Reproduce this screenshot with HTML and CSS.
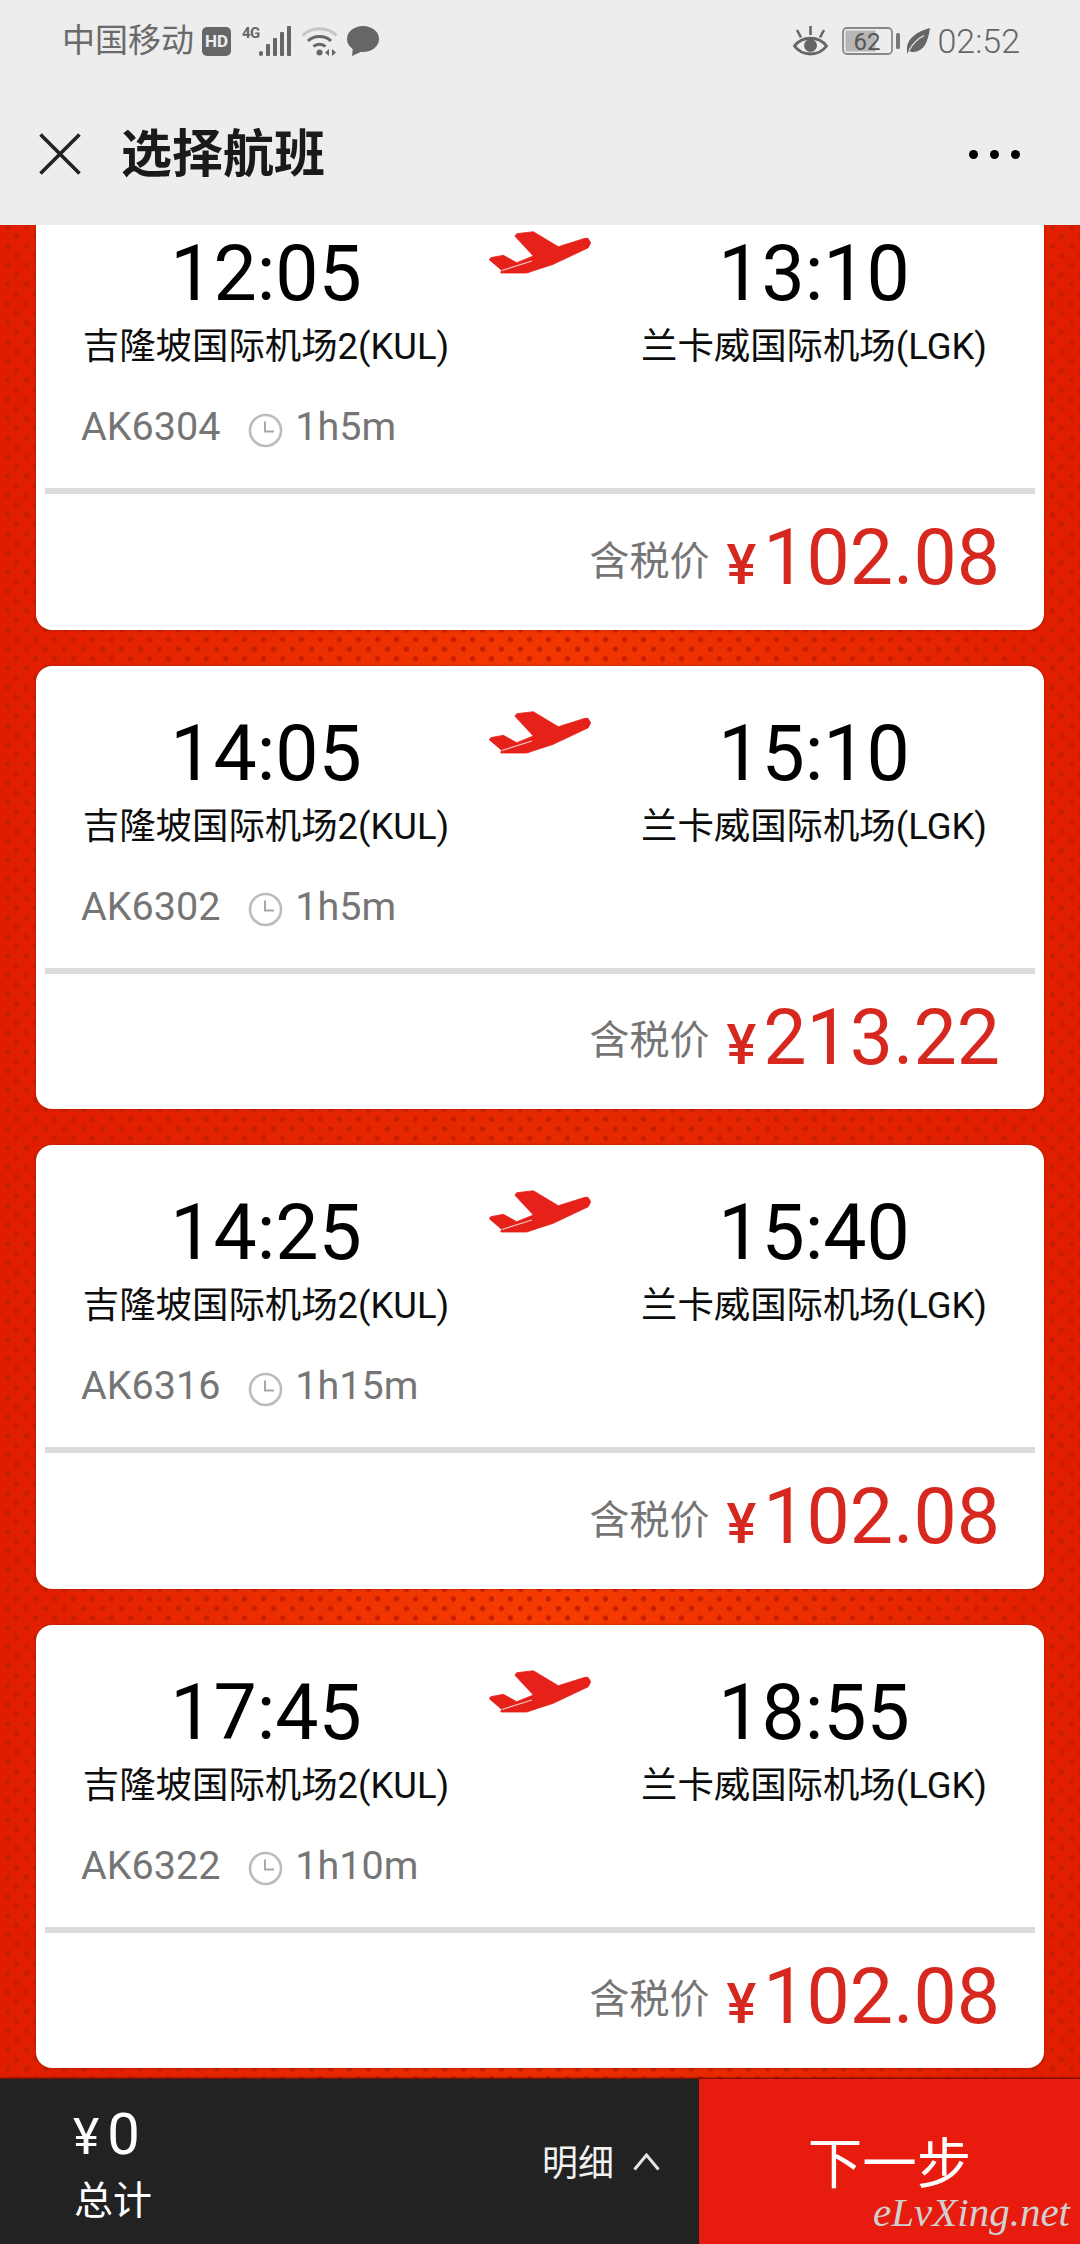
FILE: index.html
```html
<!DOCTYPE html>
<html lang="zh-CN">
<head>
<meta charset="utf-8">
<title>选择航班</title>
<link rel="stylesheet" href="styles.css">
</head>
<body>
<svg class="defs" width="0" height="0" aria-hidden="true">
  <symbol id="plane" viewBox="19 19 102 44">
    <path d="M120.7 31.7 118 27.3 115 27.3 88.3 35.7 63.3 20.7 46.7 22.7 45 25.3 63.3 45 46.7 51.7 33.3 44.3 20.7 46.7 19.3 48.7 31.7 59.3 30.7 62 56.7 62 83.3 53.3 118.3 36.7Z" fill="#e5211a" stroke="#e5211a" stroke-width=".8"/>
    <path d="M32 59.5 62 50" stroke="#fff" stroke-width="1.2" opacity=".75" fill="none"/>
  </symbol>
  <symbol id="clock" viewBox="0 0 35 35">
    <circle cx="17.5" cy="17.5" r="15.5" fill="none" stroke="#bcbcbc" stroke-width="2.6"/>
    <path d="M17 8.5V18.5H26" fill="none" stroke="#a8a8a8" stroke-width="2"/>
  </symbol>
</svg>
<div class="app">
  <header class="head">
    <div class="status">
      <div class="status-side">
        <span class="carrier">中国移动</span>
        <svg class="ic-hd" width="29" height="29" viewBox="0 0 29 29"><rect width="29" height="29" rx="5" fill="#666"/><text x="14.5" y="20" text-anchor="middle" class="hd-text">HD</text></svg>
        <svg class="ic-sig" width="49" height="30" viewBox="0 0 49 30"><text x="0" y="12" class="sig-text">4G</text><rect x="17" y="25" width="4" height="5" rx="2" fill="#666"/><rect x="24" y="18" width="4" height="12" rx="1" fill="#666"/><rect x="31" y="12" width="4" height="18" rx="1" fill="#666"/><rect x="38" y="6" width="4" height="24" rx="1" fill="#666"/><rect x="45" y="0" width="4" height="30" rx="1" fill="#666"/></svg>
        <svg class="ic-wifi" width="37" height="30" viewBox="0 0 37 30"><path d="M1.500 9.500C10.500 .5 26.500 .5 35.500 9.500" fill="none" stroke="#c6c6c6" stroke-width="3"/><path d="M7 15C13 9 24 9 30 15" fill="none" stroke="#666" stroke-width="3"/><path d="M12.500 20.500C15.500 17.500 21.500 17.500 24.500 20.500" fill="none" stroke="#666" stroke-width="3"/><circle cx="18.500" cy="26.500" r="3" fill="#666"/><path d="M28 23v7l-4-3.500zM31 23v7l4-3.500z" fill="#666"/></svg>
        <svg class="ic-bubble" width="32" height="30" viewBox="0 0 32 30"><ellipse cx="16" cy="13" rx="16" ry="13" fill="#666"/><path d="M6 21 5 30 16 25z" fill="#666"/></svg>
      </div>
      <div class="status-side">
        <svg class="ic-eye" width="35" height="30" viewBox="0 0 35 30"><path d="M1.500 20C9 9.500 26 9.500 33.500 20 26 30.500 9 30.500 1.500 20Z" fill="none" stroke="#666" stroke-width="3"/><circle cx="17.500" cy="19.500" r="6.500" fill="#666"/><path d="M17.500 0v9M4 4l4 7.500M31 4l-4 7.500" stroke="#666" stroke-width="2.600"/></svg>
        <svg class="ic-batt" width="58" height="28" viewBox="0 0 58 28"><rect x="1" y="1" width="49" height="26" rx="4" fill="none" stroke="#888" stroke-width="1.800"/><rect x="3.500" y="3.500" width="30" height="21" fill="#b6b6b6"/><rect x="54" y="6" width="4" height="16" rx="1.500" fill="#777"/><text x="25" y="23" text-anchor="middle" class="batt-text">62</text></svg>
        <svg class="ic-leaf" width="23" height="26" viewBox="0 0 23 26"><path d="M23 0C21 14 17 23 7 24 4.500 24.300 3 23.500 2 22.500L0 26 0 22C-1 12 8 4 23 0Z" fill="#666"/><path d="M2 22.500C6 15 11 10.500 17 7.500" stroke="#eee" stroke-width="1.200" fill="none"/></svg>
        <span class="clock-time">02:52</span>
      </div>
    </div>
    <div class="toolbar">
      <svg class="ic-close" width="42" height="42" viewBox="0 0 42 42"><path d="M1.500 1.500 40.500 40.500M40.500 1.500 1.500 40.500" stroke="#222" stroke-width="3.600" fill="none"/></svg>
      <h1 class="title">选择航班</h1>
      <div class="dots"><i></i><i></i><i></i></div>
    </div>
  </header>

  <main class="list">
    <article class="card">
      <div class="route">
        <div class="point"><div class="time">12:05</div><div class="airport">吉隆坡国际机场2(KUL)</div></div>
        <svg class="plane"><use href="#plane"/></svg>
        <div class="point"><div class="time">13:10</div><div class="airport">兰卡威国际机场(LGK)</div></div>
      </div>
      <div class="meta"><span>AK6304</span><svg class="clock"><use href="#clock"/></svg><span>1h5m</span></div>
      <div class="rule"></div>
      <div class="fare"><span class="fare-label">含税价</span><span class="price"><span class="yen">¥</span>102.08</span></div>
    </article>
    <article class="card">
      <div class="route">
        <div class="point"><div class="time">14:05</div><div class="airport">吉隆坡国际机场2(KUL)</div></div>
        <svg class="plane"><use href="#plane"/></svg>
        <div class="point"><div class="time">15:10</div><div class="airport">兰卡威国际机场(LGK)</div></div>
      </div>
      <div class="meta"><span>AK6302</span><svg class="clock"><use href="#clock"/></svg><span>1h5m</span></div>
      <div class="rule"></div>
      <div class="fare"><span class="fare-label">含税价</span><span class="price"><span class="yen">¥</span>213.22</span></div>
    </article>
    <article class="card">
      <div class="route">
        <div class="point"><div class="time">14:25</div><div class="airport">吉隆坡国际机场2(KUL)</div></div>
        <svg class="plane"><use href="#plane"/></svg>
        <div class="point"><div class="time">15:40</div><div class="airport">兰卡威国际机场(LGK)</div></div>
      </div>
      <div class="meta"><span>AK6316</span><svg class="clock"><use href="#clock"/></svg><span>1h15m</span></div>
      <div class="rule"></div>
      <div class="fare"><span class="fare-label">含税价</span><span class="price"><span class="yen">¥</span>102.08</span></div>
    </article>
    <article class="card">
      <div class="route">
        <div class="point"><div class="time">17:45</div><div class="airport">吉隆坡国际机场2(KUL)</div></div>
        <svg class="plane"><use href="#plane"/></svg>
        <div class="point"><div class="time">18:55</div><div class="airport">兰卡威国际机场(LGK)</div></div>
      </div>
      <div class="meta"><span>AK6322</span><svg class="clock"><use href="#clock"/></svg><span>1h10m</span></div>
      <div class="rule"></div>
      <div class="fare"><span class="fare-label">含税价</span><span class="price"><span class="yen">¥</span>102.08</span></div>
    </article>
  </main>

  <footer class="bar">
    <div class="summary">
      <div class="total">
        <div class="amount"><span class="amount-yen">¥</span>0</div>
        <div class="total-label">总计</div>
      </div>
      <div class="detail">
        <span class="detail-label">明细</span>
        <svg width="27" height="18" viewBox="0 0 27 18"><path d="M1.500 16.500 13.500 2 25.500 16.500" fill="none" stroke="#e4e4e4" stroke-width="3"/></svg>
      </div>
    </div>
    <button class="next">下一步</button>
    <span class="watermark">eLvXing.net</span>
  </footer>
</div>
</body>
</html>
```
FILE: styles.css
```css
* { box-sizing: border-box; }
html, body { margin: 0; padding: 0; }
body {
  width: 1080px;
  height: 2244px;
  overflow: hidden;
  font-family: Roboto, "Noto Sans CJK SC", sans-serif;
  background: #e42000;
}
.defs { position: absolute; }
.app {
  position: relative;
  width: 1080px;
  height: 2244px;
  display: flex;
  flex-direction: column;
  overflow: hidden;
}

/* header */
.head { flex: 0 0 225px; height: 225px; background: #ededed; position: relative; z-index: 2; }
.status {
  height: 82px;
  padding: 0 60px 0 62px;
  display: flex;
  justify-content: space-between;
  align-items: center;
  color: #666;
}
.status-side { display: flex; align-items: center; }
.carrier { font-size: 33px; line-height: 40px; color: #6a6a6a; white-space: nowrap; }
.ic-hd { margin-left: 8px; }
.ic-sig { margin-left: 11px; }
.ic-wifi { margin-left: 10px; }
.ic-bubble { margin-left: 9px; }
.hd-text { font: 700 17px Roboto, sans-serif; fill: #eee; }
.sig-text { font: 700 15px Roboto, sans-serif; fill: #666; letter-spacing: -.5px; }
.batt-text { font: 400 24px Roboto, sans-serif; fill: #555; }
.ic-batt { margin-left: 14px; }
.ic-leaf { margin-left: 7px; }
.clock-time { margin-left: 7px; font-size: 34px; font-weight: 300; line-height: 40px; color: #666; }
.toolbar {
  height: 143px;
  padding: 0 60px 0 39px;
  display: flex;
  align-items: center;
}
.title {
  margin: 2px 0 0 40px;
  font-size: 51px;
  font-weight: 700;
  line-height: 60px;
  color: #1a1a1a;
  flex: 1;
}
.dots { display: flex; gap: 12px; margin-top: 2px; }
.dots i { width: 9px; height: 9px; border-radius: 50%; background: #000; }

/* list */
.list {
  flex: 1;
  min-height: 0;
  overflow: hidden;
  padding: 0 36px;
  display: flex;
  flex-direction: column;
  gap: 36px;
  background-color: #e42000;
  background-image:
    radial-gradient(circle at 50% 50%, #c61e00 0, #c61e00 2px, rgba(198,30,0,0) 3.300px),
    radial-gradient(circle at 50% 50%, #c61e00 0, #c61e00 2px, rgba(198,30,0,0) 3.300px),
    linear-gradient(90deg, #e01d00 0, rgba(224,29,0,0) 46%, rgba(224,29,0,0) 54%, #e01d00 100%),
    linear-gradient(180deg, #e62800 0, #ff4700 100%);
  background-size: 19px 19.2px, 19px 19.2px, 100% 100%, 100% 832px;
  background-position: 7px 2px, 17px 11.600px, 0 0, 0 35px;
}
.card {
  flex: 0 0 443.500px;
  height: 443.500px;
  background: #fff;
  border-radius: 16px;
  box-shadow: 0 0 3px rgba(110,40,0,.55);
  padding-top: 48px;
  display: flex;
  flex-direction: column;
}
.card:first-child { margin-top: -39px; }
.route { display: flex; }
.point { flex: 0 0 460px; text-align: center; }
.time { font-size: 77px; line-height: 80px; color: #000; }
.airport { margin-top: 13px; font-size: 36.400px; line-height: 40px; color: #0d0d0d; white-space: nowrap; }
.plane { flex: 0 0 102px; width: 102px; height: 44px; margin: -4px -7px 0; filter: blur(.5px); }
.meta {
  margin-top: 38px;
  padding-left: 45px;
  height: 44px;
  display: flex;
  align-items: center;
  font-size: 39.500px;
  line-height: 44px;
  color: #757575;
}
.clock { width: 35px; height: 35px; margin: 6px 12px 0 28px; }
.rule { margin: 39px 9px 0; height: 6px; background: #dcdcdc; flex: none; }
.fare {
  padding: 24px 44px 0 0;
  display: flex;
  justify-content: flex-end;
  align-items: center;
}
.fare-label { font-size: 40px; line-height: 48px; color: #757575; margin: 0 17px 0 0; }
.price { font-size: 77px; line-height: 80px; color: #d6281f; white-space: nowrap; }
.yen { font-size: 56px; font-weight: 500; margin-right: 7px; }

/* bottom bar */
.bar { flex: 0 0 165px; height: 165px; display: flex; box-shadow: 0 -1px 2px rgba(60,0,0,.8); position: relative; z-index: 2; }
.summary {
  width: 699px;
  background: #222;
  padding: 0 39px 0 73px;
  display: flex;
  justify-content: space-between;
  align-items: center;
  color: #fff;
}
.amount { font-size: 58px; line-height: 70px; }
.amount-yen { font-size: 50px; margin-right: 8px; }
.total-label { margin-top: 4px; padding-left: 1px; font-size: 39px; line-height: 50px; }
.total { padding-top: 1px; }
.detail { display: flex; align-items: center; gap: 19px; font-size: 36px; color: #f2f2f2; }
.detail-label { margin-bottom: 4px; }
.next {
  flex: 1;
  border: 0;
  padding: 0 0 5px;
  background: #e71c0f;
  color: #fff;
  font: 400 54.500px Roboto, "Noto Sans CJK SC", sans-serif;
}
.watermark {
  position: absolute;
  right: 10px;
  top: 107px;
  font: italic 41px/52px "Liberation Serif", serif;
  color: #d0d0d0;
  white-space: nowrap;
}
```
